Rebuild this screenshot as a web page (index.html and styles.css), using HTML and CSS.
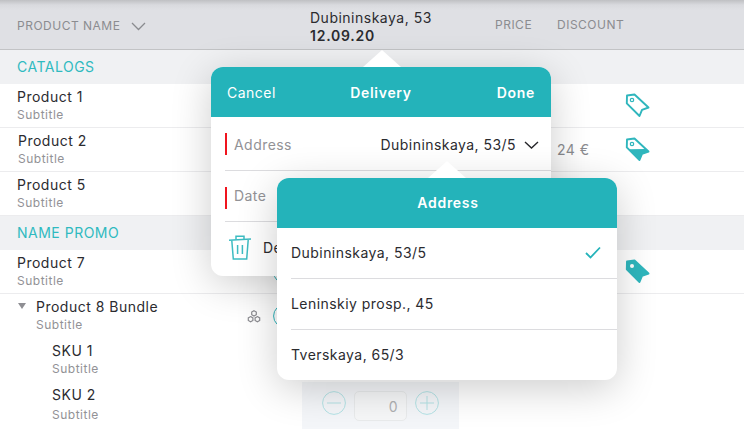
FILE: index.html
```html
<!DOCTYPE html>
<html lang="en">
<head>
    <meta charset="UTF-8">
    <meta name="viewport" content="width=device-width, initial-scale=1.0">
    <title>Products</title>
    <link rel="stylesheet" href="styles.css">
</head>
<body>
    <svg class="defs" width="0" height="0">
        <symbol id="tag" viewBox="0 0 26 25">
            <path d="M2 2.5 9.5 1.5 23.5 14.5 17 16.8 14.5 23 1.8 10.3Z" fill="none" stroke="currentColor" stroke-width="1.9" stroke-linejoin="round"/>
            <circle cx="7" cy="7" r="1.7" fill="none" stroke="currentColor" stroke-width="1.2"/>
        </symbol>
        <symbol id="minus" viewBox="0 0 24 24">
            <circle cx="12" cy="12" r="11.4" fill="none" stroke="currentColor"/>
            <path d="M5 12H19" stroke="currentColor"/>
        </symbol>
        <symbol id="plus" viewBox="0 0 24 24">
            <circle cx="12" cy="12" r="11.4" fill="none" stroke="currentColor"/>
            <path d="M5 12H19M12 5V19" stroke="currentColor"/>
        </symbol>
    </svg>

    <header class="table-head">
        <div class="head-name">Product name
            <svg class="chevron" width="15" height="9" viewBox="0 0 15 9"><path d="M1 1 7.5 7.5 14 1" fill="none" stroke="#8a8b8f" stroke-width="1.3"/></svg>
        </div>
        <div class="head-store">
            <div>Dubininskaya, 53</div>
            <strong>12.09.20</strong>
        </div>
        <div class="head-price">Price</div>
        <div class="head-discount">Discount</div>
    </header>

    <div class="section">Catalogs</div>
    <div class="row">
        <div class="name"><div class="title">Product 1</div><div class="sub">Subtitle</div></div>
        <div></div>
        <div></div>
        <div></div>
        <svg class="tag"><use href="#tag"/></svg>
    </div>
    <div class="row shifted">
        <div class="name"><div class="title">Product 2</div><div class="sub">Subtitle</div></div>
        <div></div>
        <div></div>
        <div class="price">24 €</div>
        <svg class="tag" viewBox="0 0 26 25">
            <use href="#tag"/>
            <path d="M4 12.3 20.5 11.9 23.5 14.5 17 16.8 14.5 23Z" fill="currentColor"/>
        </svg>
    </div>
    <div class="row">
        <div class="name"><div class="title">Product 5</div><div class="sub">Subtitle</div></div>
    </div>

    <div class="section">Name promo</div>
    <div class="row">
        <div class="name"><div class="title">Product 7</div><div class="sub">Subtitle</div></div>
        <div></div>
        <div class="stepper"><svg class="round"><use href="#minus"/></svg></div>
        <div></div>
        <svg class="tag" viewBox="0 0 26 25">
            <path d="M2 2.5 9.5 1.5 23.5 14.5 17 16.8 14.5 23 1.8 10.3Z" fill="currentColor" stroke="currentColor" stroke-width="1.9" stroke-linejoin="round"/>
            <circle cx="7" cy="7" r="2" fill="#fff"/>
        </svg>
    </div>
    <div class="row bundle">
        <div class="name">
            <span class="caret"></span>
            <div class="title">Product 8 Bundle</div><div class="sub">Subtitle</div>
        </div>
        <svg class="bundle-icon" width="14" height="13" viewBox="0 0 14 13">
            <g fill="none" stroke="#8e8e93" stroke-width="1.2">
                <path d="M7 .8 9.3 2.1V4.7L7 6 4.7 4.7V2.1Z"/>
                <path d="M3.6 6.6 5.9 7.9V10.5L3.6 11.8 1.3 10.5V7.9Z"/>
                <path d="M10.4 6.6 12.7 7.9V10.5L10.4 11.8 8.1 10.5V7.9Z"/>
            </g>
        </svg>
        <div class="stepper"><svg class="round"><use href="#minus"/></svg></div>
    </div>
    <div class="sku-row">
        <div class="name"><div class="title">SKU 1</div><div class="sub">Subtitle</div></div>
    </div>
    <div class="sku-row">
        <div class="name"><div class="title">SKU 2</div><div class="sub">Subtitle</div></div>
        <div class="sku-qty">
            <svg class="round faded"><use href="#minus"/></svg>
            <div class="qty-input">0</div>
            <svg class="round faded"><use href="#plus"/></svg>
        </div>
    </div>

    <!-- delivery popover -->
    <div class="popover delivery">
        <div class="pop-head">
            <span>Cancel</span>
            <strong class="pop-title">Delivery</strong>
            <strong class="pop-done">Done</strong>
        </div>
        <div class="pop-row required">
            <span class="field">Address</span>
            <span class="value">Dubininskaya, 53/5</span>
            <svg width="15" height="8" viewBox="0 0 15 8"><path d="M1 1 7.5 7 14 1" fill="none" stroke="#26262a" stroke-width="1.4"/></svg>
        </div>
        <div class="pop-row required">
            <span class="field">Date</span>
        </div>
        <div class="pop-row delete">
            <svg class="trash" width="24" height="25" viewBox="0 0 24 25">
                <g fill="none" stroke="#3dbcc2" stroke-width="1.5">
                    <path d="M1 5.2 23 4"/>
                    <path d="M8 4.6V1.2H16V4.2"/>
                    <path d="M3.8 5.5 5.3 24H18.7L20.2 5"/>
                    <path d="M9.6 10V19M14.4 10V19"/>
                </g>
            </svg>
            <span>Delete</span>
        </div>
    </div>

    <!-- address picker over the popover -->
    <div class="popover address">
        <div class="pop-head center"><strong>Address</strong></div>
        <div class="pick">
            <span>Dubininskaya, 53/5</span>
            <svg width="16" height="13" viewBox="0 0 16 13"><path d="M1 7 5.5 11.5 15 1.5" fill="none" stroke="#24b3ba" stroke-width="1.8"/></svg>
        </div>
        <div class="pick"><span>Leninskiy prosp., 45</span></div>
        <div class="pick"><span>Tverskaya, 65/3</span></div>
    </div>
</body>
</html>
```

FILE: styles.css
```css
* {
    box-sizing: border-box;
}
body {
    font-family: Inter, "Noto Sans", sans-serif;
    margin: 0;
    width: 744px;
    height: 429px;
    overflow: hidden;
    position: relative;
    background: #fff;
    color: #2b2b2f;
    font-size: 14px;
    letter-spacing: 0.5px;
}
.defs {
    position: absolute;
}

/* table head */
.table-head {
    height: 50px;
    display: flex;
    background: linear-gradient(#bfc0c3 0, #d9dade 5px, #dfe0e4 10px);
    border-bottom: 1px solid #c2c3c5;
    color: #8b8c90;
    font-size: 12px;
    text-transform: uppercase;
}
.head-name {
    width: 310px;
    padding: 18px 0 0 17px;
    display: flex;
    align-items: flex-start;
}
.chevron {
    margin: 4px 0 0 11px;
}
.head-store {
    width: 185px;
    padding-top: 9px;
    color: #2b2b2f;
    font-size: 14px;
    line-height: 17px;
    text-transform: none;
}
.head-store strong {
    display: block;
    margin-top: 1px;
    font-weight: 600;
    letter-spacing: 0.75px;
}
.head-price {
    width: 62px;
    padding-top: 17px;
}
.head-discount {
    padding-top: 17px;
}

/* rows */
.section {
    height: 34px;
    padding: 8px 0 0 17px;
    background: #f0f1f3;
    color: #2fbac0;
    font-size: 14px;
    line-height: 18px;
    text-transform: uppercase;
}
.row {
    height: 44px;
    display: grid;
    grid-template-columns: 247px 26px 284px 68px 1fr;
    border-bottom: 1px solid #ececee;
}
.row.bundle {
    border-bottom: 0;
}
.name {
    padding: 4px 0 0 17px;
    position: relative;
}
.shifted .name {
    padding-left: 18px;
}
.title {
    font-size: 14px;
    line-height: 18px;
}
.sub {
    color: #929296;
    font-size: 12px;
    line-height: 18px;
}
.bundle .name {
    padding-left: 36px;
}
.caret {
    position: absolute;
    left: 18px;
    top: 9px;
    border: 4.5px solid transparent;
    border-top: 6px solid #8e8e93;
    border-bottom: 0;
}
.bundle-icon {
    margin-top: 16px;
}
.price {
    padding-top: 13px;
    color: #8b8c90;
    font-size: 14px;
}
.tag {
    width: 26px;
    height: 25px;
    margin-top: 9px;
    color: #2fb6bd;
}
.stepper {
    padding-top: 10px;
}
.round {
    display: block;
    width: 24px;
    height: 24px;
    color: #2fb6bd;
}
.round.faded {
    color: #b4e3e6;
}
.sku-row {
    height: 44px;
    display: grid;
    grid-template-columns: 302px 157px;
}
.sku-row .name {
    padding-left: 52px;
}
.sku-row + .sku-row .sub {
    margin-top: 2px;
}
.sku-qty {
    height: 47px;
    padding: 9px 20px 0;
    display: flex;
    align-items: flex-start;
    justify-content: space-between;
    background: #f4f6f9;
}
.qty-input {
    width: 53px;
    height: 30px;
    padding: 6px 8px 0 0;
    border: 1px solid #e9ebec;
    border-radius: 5px;
    background: #f6f7f8;
    color: #b0b1b3;
    text-align: right;
}

/* popovers */
.popover {
    position: absolute;
    width: 340px;
    background: #fff;
    border-radius: 12px;
    box-shadow: 0 8px 40px rgba(0, 0, 0, 0.2);
    letter-spacing: 0.45px;
}
.popover::before {
    content: "";
    position: absolute;
    top: -17px;
    border: 19px solid transparent;
    border-top: 0;
    border-bottom: 17px solid #fff;
}
.delivery {
    left: 211px;
    top: 67px;
    height: 209px;
}
.delivery::before {
    left: 152px;
}
.address {
    left: 277px;
    top: 178px;
    height: 202px;
}
.address::before {
    left: 151px;
}
.pop-head {
    height: 50px;
    padding: 0 16px;
    display: flex;
    align-items: center;
    background: #24b3ba;
    border-radius: 12px 12px 0 0;
    color: #fff;
    font-size: 14px;
    letter-spacing: 0.5px;
}
.pop-head > * {
    flex: 1;
}
.pop-head strong {
    font-weight: 600;
    letter-spacing: 0.7px;
}
.pop-title {
    text-align: center;
}
.pop-done {
    text-align: right;
}
.pop-head.center {
    padding: 0 0 2px 2px;
    text-align: center;
}
.pop-row {
    height: 51px;
    margin-left: 14px;
    padding: 0 12px 1px 0;
    display: flex;
    align-items: center;
    border-bottom: 1px solid #dcdcdf;
}
.pop-row.delete {
    height: 54px;
    padding-bottom: 4px;
    border-bottom: 0;
    margin-left: 17px;
}
.required {
    position: relative;
    padding-left: 9px;
}
.required::before {
    content: "";
    position: absolute;
    left: 0;
    top: 16px;
    width: 2px;
    height: 22px;
    background: #f0141e;
}
.pop-row:nth-child(2) {
    height: 54px;
    padding-top: 2px;
    padding-bottom: 0;
}
.field {
    flex: 1;
    color: #929296;
}
.value {
    margin-right: 8px;
}
.trash {
    margin-right: 11px;
}
.pick {
    height: 51px;
    margin-left: 14px;
    padding: 0 16px 2px 0;
    display: flex;
    align-items: center;
    justify-content: space-between;
    border-bottom: 1px solid #dcdcdf;
}
.pick:last-child {
    border-bottom: 0;
}
```
